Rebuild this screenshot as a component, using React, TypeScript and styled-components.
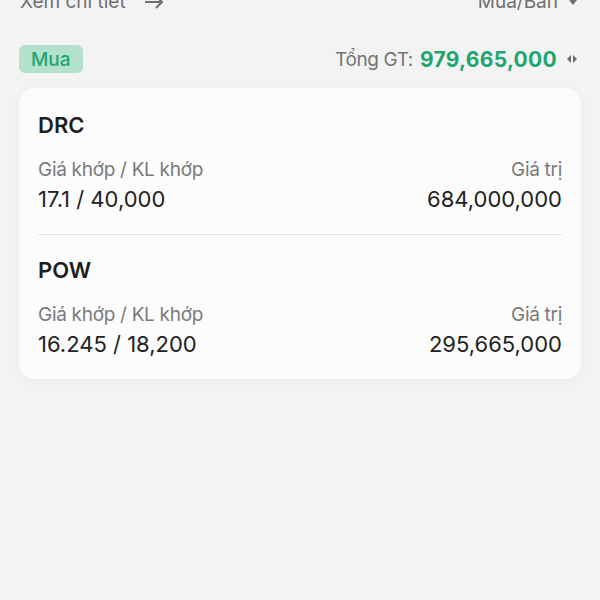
import styled, { createGlobalStyle } from 'styled-components';

const GlobalStyle = createGlobalStyle`
  html, body {
    margin: 0;
    padding: 0;
    background-color: #f3f3f3;
    font-family: Inter, 'Noto Sans', sans-serif;
  }
`;

type Trade = {
  symbol: string;
  price: string;
  volume: string;
  value: string;
};

const trades: Trade[] = [
  { symbol: 'DRC', price: '17.1', volume: '40,000', value: '684,000,000' },
  { symbol: 'POW', price: '16.245', volume: '18,200', value: '295,665,000' },
];

const App = () => {
  return (
    <>
      <GlobalStyle />
      <Page>
        <TopBar>
          <DetailLink>
            Xem chi tiết
            <ArrowIcon viewBox="0 0 22 20">
              <path d="M2 10h17M13 4l6 6-6 6" />
            </ArrowIcon>
          </DetailLink>
          <SideFilter>
            Mua/Bán
            <CaretIcon viewBox="0 0 10 10">
              <path d="M1 3h8L5 8z" />
            </CaretIcon>
          </SideFilter>
        </TopBar>

        <SummaryRow>
          <SideBadge>Mua</SideBadge>
          <Total>
            <TotalLabel>Tổng GT:</TotalLabel>
            <TotalValue>979,665,000</TotalValue>
            <SortIcon viewBox="0 0 12 10">
              <path d="M5 1L1 5l4 4z" />
              <path d="M7 1l4 4-4 4z" />
            </SortIcon>
          </Total>
        </SummaryRow>

        <Card>
          {trades.map((trade, index) => (
            <TradeItem key={trade.symbol} $last={index === trades.length - 1}>
              <Symbol>{trade.symbol}</Symbol>
              <InfoRow>
                <InfoColumn>
                  <InfoLabel>Giá khớp / KL khớp</InfoLabel>
                  <InfoValue>
                    {trade.price} / {trade.volume}
                  </InfoValue>
                </InfoColumn>
                <InfoColumn $right>
                  <InfoLabel>Giá trị</InfoLabel>
                  <InfoValue>{trade.value}</InfoValue>
                </InfoColumn>
              </InfoRow>
            </TradeItem>
          ))}
        </Card>
      </Page>
    </>
  );
};

const Page = styled.div`
  display: flex;
  flex-direction: column;
  min-height: 600px;
  padding: 0 19px;
  box-sizing: border-box;
  overflow: hidden;
`;

const TopBar = styled.div`
  display: flex;
  justify-content: space-between;
  align-items: center;
  height: 24px;
  margin-top: -10px;
  color: #6f6f6f;
  font-size: 19px;
  line-height: 24px;
`;

const DetailLink = styled.div`
  display: flex;
  align-items: center;
  gap: 17px;
  padding-left: 1px;
`;

const ArrowIcon = styled.svg`
  width: 22px;
  height: 20px;
  fill: none;
  stroke: #6f6f6f;
  stroke-width: 2;
`;

const SideFilter = styled.div`
  display: flex;
  align-items: center;
  gap: 10px;
  padding-right: 3px;
`;

const CaretIcon = styled.svg`
  width: 10px;
  height: 10px;
  fill: #6f6f6f;
`;

const SummaryRow = styled.div`
  display: flex;
  justify-content: space-between;
  align-items: center;
  margin-top: 31px;
  height: 28px;
`;

const SideBadge = styled.div`
  display: flex;
  align-items: center;
  height: 28px;
  padding: 0 12px;
  border-radius: 6px;
  background-color: #b3e2cc;
  color: #1fa66f;
  font-size: 19px;
  font-weight: 500;
`;

const Total = styled.div`
  display: flex;
  align-items: center;
  padding-right: 3px;
`;

const TotalLabel = styled.span`
  margin-right: 7px;
  color: #757575;
  font-size: 19px;
  letter-spacing: -0.4px;
`;

const TotalValue = styled.span`
  color: #1fa66f;
  font-size: 21px;
  font-weight: 700;
  letter-spacing: 0.3px;
`;

const SortIcon = styled.svg`
  width: 12px;
  height: 10px;
  margin-left: 9px;
  fill: #6f6f6f;
`;

const Card = styled.div`
  display: flex;
  flex-direction: column;
  margin-top: 15px;
  padding: 2px 19px 0;
  border-radius: 16px;
  background-color: #fcfcfc;
  box-shadow: 0 4px 12px rgba(0, 0, 0, 0.03);
`;

const TradeItem = styled.div<{ $last?: boolean }>`
  display: flex;
  flex-direction: column;
  padding: 22px 0 21px;
  border-bottom: ${({ $last }) => ($last ? 'none' : '1px solid #e4e4e4')};
`;

const Symbol = styled.div`
  color: #1d1d1d;
  font-size: 22px;
  line-height: 26px;
  font-weight: 600;
`;

const InfoRow = styled.div`
  display: flex;
  justify-content: space-between;
  margin-top: 20px;
`;

const InfoColumn = styled.div<{ $right?: boolean }>`
  display: flex;
  flex-direction: column;
  align-items: ${({ $right }) => ($right ? 'flex-end' : 'flex-start')};
  gap: 3px;
`;

const InfoLabel = styled.div`
  color: #7a7a7a;
  font-size: 19px;
  line-height: 24px;
  letter-spacing: -0.3px;
`;

const InfoValue = styled.div`
  color: #222;
  font-size: 22px;
  line-height: 28px;
`;

export default App;
